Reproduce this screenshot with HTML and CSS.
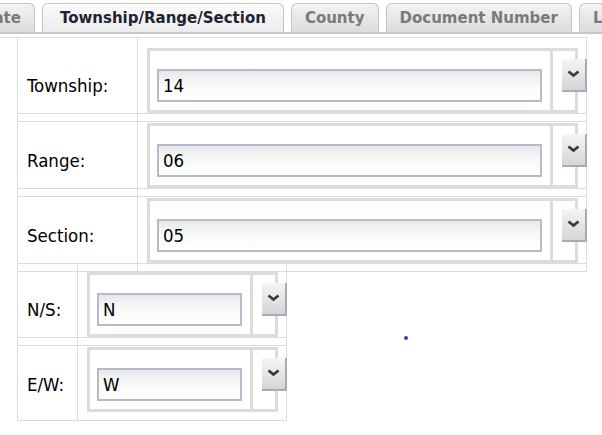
FILE: index.html
```html
<!DOCTYPE html>
<html>
<head>
<meta charset="utf-8">
<link rel="stylesheet" href="styles.css">
</head>
<body>
<div class="tabs">
  <div class="tab first">Date</div>
  <div class="tab active">Township/Range/Section</div>
  <div class="tab">County</div>
  <div class="tab">Document Number</div>
  <div class="tab">Li</div>
</div>
<div class="panel">
  <div class="form wide">
    <div class="lbl">Township:</div>
    <div class="val top"><div class="box"><div class="inp-cell"><input class="inp" value="14"></div><div class="btn-cell"><span class="btn"><svg width="13" height="8" viewBox="0 0 13 8"><polyline points="1.5,1.5 6.5,5.5 11.5,1.5" fill="none" stroke="#3a3a3a" stroke-width="2.8"/></svg></span></div></div></div>
    <div class="sp lsp"></div><div class="sp"></div>
    <div class="lbl">Range:</div>
    <div class="val"><div class="box"><div class="inp-cell"><input class="inp" value="06"></div><div class="btn-cell"><span class="btn"><svg width="13" height="8" viewBox="0 0 13 8"><polyline points="1.5,1.5 6.5,5.5 11.5,1.5" fill="none" stroke="#3a3a3a" stroke-width="2.8"/></svg></span></div></div></div>
    <div class="sp lsp"></div><div class="sp"></div>
    <div class="lbl">Section:</div>
    <div class="val"><div class="box"><div class="inp-cell"><input class="inp" value="05"></div><div class="btn-cell"><span class="btn"><svg width="13" height="8" viewBox="0 0 13 8"><polyline points="1.5,1.5 6.5,5.5 11.5,1.5" fill="none" stroke="#3a3a3a" stroke-width="2.8"/></svg></span></div></div></div>
    <div class="sp lsp"></div><div class="sp"></div>
  </div>
  <div class="form narrow">
    <div class="sp lsp first-sp"></div><div class="sp first-sp"></div>
    <div class="lbl">N/S:</div>
    <div class="val flush"><div class="box"><div class="inp-cell"><input class="inp" value="N"></div><div class="btn-cell"><span class="btn"><svg width="13" height="8" viewBox="0 0 13 8"><polyline points="1.5,1.5 6.5,5.5 11.5,1.5" fill="none" stroke="#3a3a3a" stroke-width="2.8"/></svg></span></div></div></div>
    <div class="sp lsp"></div><div class="sp"></div>
    <div class="lbl last">E/W:</div>
    <div class="val last"><div class="box"><div class="inp-cell"><input class="inp" value="W"></div><div class="btn-cell"><span class="btn"><svg width="13" height="8" viewBox="0 0 13 8"><polyline points="1.5,1.5 6.5,5.5 11.5,1.5" fill="none" stroke="#3a3a3a" stroke-width="2.8"/></svg></span></div></div></div>
  </div>
  <span class="dot"></span>
</div>
</body>
</html>
```
FILE: styles.css
```css
html, body {
  margin: 0;
  padding: 0;
  background: #fff;
  overflow: hidden;
}
body {
  width: 602px;
  height: 435px;
  position: relative;
  font-family: "DejaVu Sans Condensed", "DejaVu Sans", sans-serif;
  color: #000;
}
.tabs {
  display: flex;
  gap: 7px;
  padding-top: 3px;
  margin-left: -33px;
  border-bottom: 2px solid #c6c6c6;
  white-space: nowrap;
}
.tab {
  flex: none;
  height: 28px;
  line-height: 28px;
  padding: 0 13px;
  border: 1px solid #c4c4c4;
  border-bottom: none;
  border-radius: 6px 6px 0 0;
  background: linear-gradient(#f3f3f3, #dcdcdc);
  color: #7a7a7a;
  font-family: "DejaVu Sans", sans-serif;
  font-weight: bold;
  font-size: 15px;
}
.tab.active {
  padding: 0 17px;
  background: linear-gradient(#fbfbfb, #ececec);
  color: #1e2530;
}
.panel {
  margin-top: 3px;
  width: 587px;
  border-top: 1px solid #dcdcdc;
}
.form {
  display: grid;
  margin-left: 17px;
}
.form.wide {
  grid-template-columns: 121px 449px;
}
.form.narrow {
  grid-template-columns: 61px 209px;
  margin-top: -9px;
}
.lbl, .val, .sp {
  border-right: 1px solid #dcdcdc;
  border-bottom: 1px solid #dcdcdc;
}
.lbl, .lsp {
  border-left: 1px solid #dcdcdc;
}
.first-sp {
  border-top: 1px solid #dcdcdc;
}
.sp {
  height: 7px;
}
.lbl {
  display: flex;
  align-items: flex-end;
  padding: 0 0 17px 9px;
  font-size: 18.5px;
  line-height: 20px;
}
.lbl.last {
  padding-bottom: 25px;
}
.val {
  padding: 1px 0 0 9px;
}
.val.top {
  padding-top: 10px;
}
.val.flush {
  padding-top: 0;
}
.val.last {
  padding-top: 1px;
  padding-bottom: 8px;
}
.box {
  display: flex;
  border: 3px solid #dcdcdc;
  width: max-content;
}
.wide .box .inp-cell {
  width: 385px;
}
.narrow .box .inp-cell {
  width: 145px;
}
.inp-cell {
  padding: 18px 8px 8px 7px;
  border-right: 3px solid #dcdcdc;
}
.inp {
  display: block;
  box-sizing: border-box;
  width: 100%;
  height: 33px;
  margin: 0;
  padding: 0 0 0 4px;
  border: 2px solid #b9b9cb;
  background: linear-gradient(#e6e9e9 0, #f7f9f8 45%, #fff 100%);
  font-family: "DejaVu Sans Condensed", "DejaVu Sans", sans-serif;
  font-size: 18.5px;
  color: #000;
  outline: none;
}
.btn-cell {
  width: 13px;
  padding: 8px 0 0 9px;
}
.btn {
  display: flex;
  justify-content: center;
  align-items: flex-start;
  box-sizing: border-box;
  width: 25px;
  height: 33px;
  padding-top: 11px;
  border-right: 2px solid #a9a9b9;
  border-bottom: 2px solid #a9a9b9;
  background: linear-gradient(#f5f5f5, #d5d5d5);
}
.dot {
  position: absolute;
  left: 404px;
  top: 336px;
  width: 4px;
  height: 4px;
  border-radius: 50%;
  background: #3d3dd2;
}
```
